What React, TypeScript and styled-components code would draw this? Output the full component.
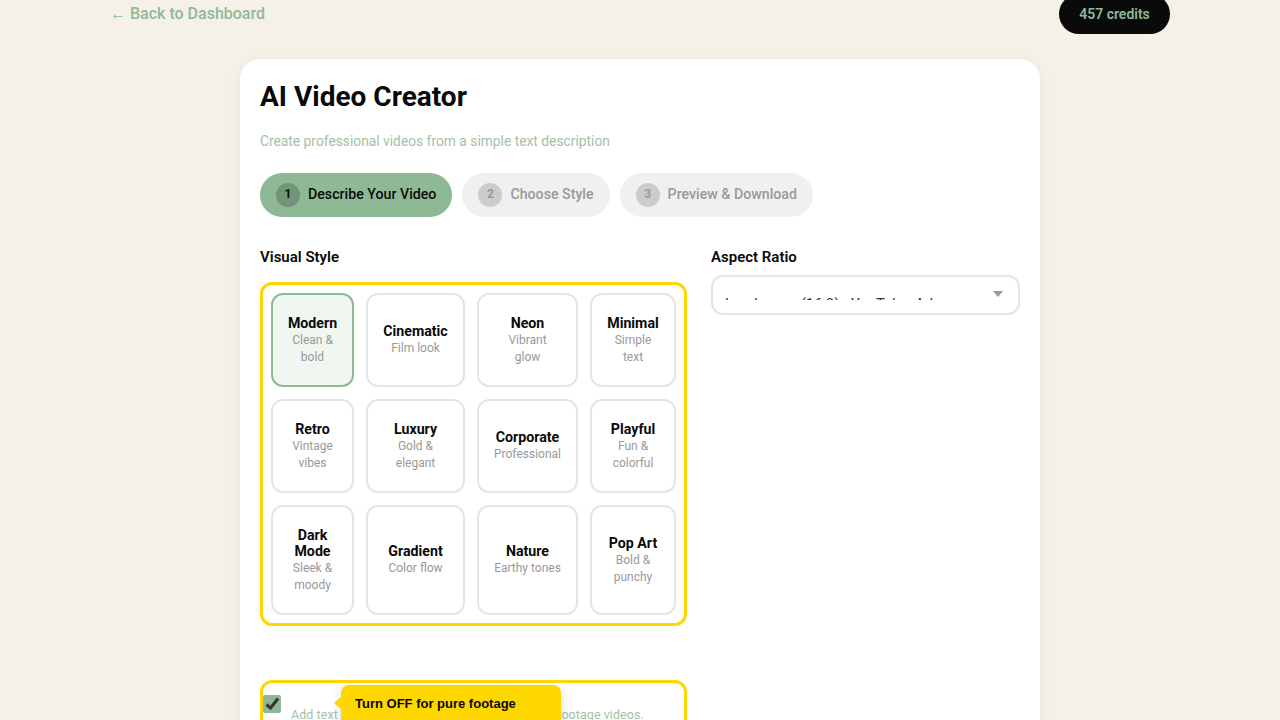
import { createGlobalStyle, styled } from "styled-components";

const GlobalStyle = createGlobalStyle`
  html, body {
    margin: 0;
    height: 720px;
    overflow: hidden;
    background: #f5f0e8;
    font-family: Roboto, "Liberation Sans", sans-serif;
  }
`;

const Page = styled.div`
  width: 1060px;
  margin: -6px auto 0 110px;
`;

const TopBar = styled.header`
  display: flex;
  align-items: flex-start;
  justify-content: space-between;
  height: 65px;
`;

const BackLink = styled.a`
  margin-top: 8px;
  font-size: 16px;
  line-height: 24px;
  font-weight: 500;
  color: #8fb996;
  text-decoration: none;
`;

const Credits = styled.div`
  width: 111px;
  height: 40px;
  box-sizing: border-box;
  border-radius: 20px;
  background: #0a0a0a;
  color: #8fb996;
  font-size: 14px;
  font-weight: 600;
  line-height: 40px;
  text-align: center;
`;

const Card = styled.main`
  width: 800px;
  min-height: 800px;
  margin-left: 130px;
  padding: 20px;
  box-sizing: border-box;
  border-radius: 20px;
  background: #fff;
  box-shadow: 0 4px 20px rgba(0, 0, 0, 0.05);
`;

const Title = styled.h1`
  margin: 0;
  font-size: 28px;
  line-height: 36px;
  font-weight: 700;
  color: #0a0a0a;
`;

const Subtitle = styled.p`
  margin: 16px 0 0;
  font-size: 13.8px;
  line-height: 20px;
  color: #a3bfa8;
`;

const Steps = styled.div`
  display: flex;
  gap: 10px;
  margin-top: 22px;
`;

const Step = styled.div<{ $active?: boolean }>`
  display: flex;
  align-items: center;
  gap: 8px;
  height: 44px;
  padding: 0 16px;
  border-radius: 22px;
  background: ${(p) => (p.$active ? "#8fb996" : "#f0f0f0")};
  color: ${(p) => (p.$active ? "#0a0a0a" : "#999")};
  font-size: 14.2px;
  line-height: 20px;
  font-weight: 500;
`;

const StepLabel = styled.span`
  margin-top: -2px;
`;

const StepNumber = styled.span<{ $active?: boolean }>`
  width: 24px;
  height: 24px;
  border-radius: 50%;
  background: ${(p) => (p.$active ? "rgba(0, 0, 0, 0.2)" : "#ccc")};
  font-size: 12px;
  font-weight: 700;
  line-height: 22px;
  text-align: center;
`;

const Columns = styled.div`
  display: grid;
  grid-template-columns: 427px 309px;
  gap: 24px;
  margin-top: 30px;
`;

const FieldLabel = styled.div`
  margin-bottom: 15px;
  font-size: 15px;
  line-height: 20px;
  font-weight: 600;
  color: #0a0a0a;
`;

const RatioLabel = styled(FieldLabel)`
  margin-bottom: 8px;
`;

const Highlight = styled.div`
  border: 3px solid #ffd700;
  border-radius: 12px;
  padding: 8px;
`;

const StyleGrid = styled.div`
  display: grid;
  grid-template-columns: 83px 99px 101px 86px;
  grid-template-rows: 94px 94px 110px;
  gap: 12px;
`;

const StyleCard = styled.button<{ $selected?: boolean }>`
  display: flex;
  flex-direction: column;
  align-items: center;
  justify-content: center;
  padding: 0 12px;
  border: 2px solid ${(p) => (p.$selected ? "#8fb996" : "#e5e5e5")};
  border-radius: 12px;
  background: ${(p) => (p.$selected ? "#f0f7f1" : "#fff")};
  font-family: inherit;
  text-align: center;
`;

const StyleName = styled.div`
  font-size: 14.2px;
  line-height: 16px;
  font-weight: 700;
  color: #0a0a0a;
`;

const StyleDesc = styled.div`
  margin-top: 1px;
  font-size: 12px;
  line-height: 17px;
  white-space: pre-line;
  color: #999;
`;

const SelectBox = styled.div`
  position: relative;
  height: 40px;
  box-sizing: border-box;
  padding-top: 19px;
  border: 2px solid #e5e5e5;
  border-radius: 12px;
  background: #fff;
`;

const SelectClip = styled.div`
  height: 4px;
  padding-left: 12px;
  overflow: hidden;
  font-size: 14.8px;
  line-height: 16px;
  white-space: nowrap;
  color: #333;
`;

const SelectArrow = styled.span`
  position: absolute;
  top: 14px;
  right: 15px;
  border-top: 6px solid #999;
  border-left: 5px solid transparent;
  border-right: 5px solid transparent;
`;

const TextOption = styled(Highlight)`
  position: relative;
  height: 120px;
  margin-top: 54px;
  padding: 12px 0 0 0;
`;

const CheckBox = styled.span`
  display: block;
  width: 18px;
  height: 18px;
  border-radius: 2px;
  background: #8fb996;
`;

const Hint = styled.div`
  margin: -6px 0 0 28px;
  font-size: 12.5px;
  letter-spacing: 0.06px;
  line-height: 16px;
  white-space: nowrap;
  color: #a3bfa8;
`;

const Tooltip = styled.div`
  position: absolute;
  top: 2px;
  left: 78px;
  width: 220px;
  height: 44px;
  box-sizing: border-box;
  padding: 10px 14px;
  border-radius: 8px;
  background: #ffd700;
  box-shadow: 0 4px 12px rgba(0, 0, 0, 0.15);
  font-family: "Liberation Sans", Arial, sans-serif;
  font-size: 13px;
  line-height: 18px;
  font-weight: 700;
  color: #0a0a0a;

  &::before {
    content: "";
    position: absolute;
    top: 12px;
    left: -7px;
    border-top: 6px solid transparent;
    border-bottom: 6px solid transparent;
    border-right: 7px solid #ffd700;
  }
`;

const styles = [
  ["Modern", "Clean & bold"],
  ["Cinematic", "Film look"],
  ["Neon", "Vibrant\nglow"],
  ["Minimal", "Simple text"],
  ["Retro", "Vintage vibes"],
  ["Luxury", "Gold & elegant"],
  ["Corporate", "Professional"],
  ["Playful", "Fun & colorful"],
  ["Dark Mode", "Sleek & moody"],
  ["Gradient", "Color flow"],
  ["Nature", "Earthy tones"],
  ["Pop Art", "Bold & punchy"],
];

const App = () => {
  return (
    <Page>
      <GlobalStyle />
      <TopBar>
        <BackLink href="#">← Back to Dashboard</BackLink>
        <Credits>457 credits</Credits>
      </TopBar>
      <Card>
        <Title>AI Video Creator</Title>
        <Subtitle>Create professional videos from a simple text description</Subtitle>
        <Steps>
          <Step $active>
            <StepNumber $active>1</StepNumber>
            <StepLabel>Describe Your Video</StepLabel>
          </Step>
          <Step>
            <StepNumber>2</StepNumber>
            <StepLabel>Choose Style</StepLabel>
          </Step>
          <Step>
            <StepNumber>3</StepNumber>
            <StepLabel>Preview &amp; Download</StepLabel>
          </Step>
        </Steps>
        <Columns>
          <div>
            <FieldLabel>Visual Style</FieldLabel>
            <Highlight>
              <StyleGrid>
                {styles.map(([name, desc], i) => (
                  <StyleCard key={name} $selected={i === 0}>
                    <StyleName>{name}</StyleName>
                    <StyleDesc>{desc}</StyleDesc>
                  </StyleCard>
                ))}
              </StyleGrid>
            </Highlight>
            <TextOption>
              <CheckBox>
                <svg width="18" height="18" viewBox="0 0 18 18">
                  <path d="M3.5 9.5 L7.5 13 L15 3.5" fill="none" stroke="#333" strokeWidth="3" />
                </svg>
              </CheckBox>
              <Hint>Add text overlays to the video. Turn off for pure footage videos.</Hint>
              <Tooltip>Turn OFF for pure footage</Tooltip>
            </TextOption>
          </div>
          <div>
            <RatioLabel>Aspect Ratio</RatioLabel>
            <SelectBox>
              <SelectClip>Landscape (16:9) - YouTube, Ads</SelectClip>
              <SelectArrow />
            </SelectBox>
          </div>
        </Columns>
      </Card>
    </Page>
  );
};

export default App;
